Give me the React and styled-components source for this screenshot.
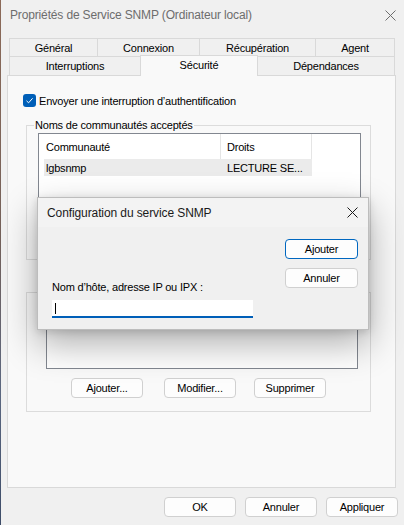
import React from "react";
import styled, { createGlobalStyle } from "styled-components";

const GlobalStyle = createGlobalStyle`
  html, body { margin: 0; padding: 0; }
  body {
    width: 404px;
    height: 525px;
    overflow: hidden;
    background: linear-gradient(#8c6a58 0%, #74615a 45%, #5b6780 75%, #3d4c68 100%);
    font-family: "Liberation Sans", Arial, sans-serif;
    font-size: 11px;
    letter-spacing: -0.2px;
    color: #000;
  }
`;

const Screen = styled.div`
  display: flex;
  width: 404px;
  height: 525px;
`;

const Edge = styled.div`
  width: 1px;
  flex: none;
`;

const Window = styled.div`
  position: relative;
  flex: 1;
  display: flex;
  flex-direction: column;
  background: #f0f0f0;
`;

const TitleBar = styled.div`
  height: 30px;
  display: flex;
  align-items: center;
  justify-content: space-between;
  padding: 0 8px 0 9px;
  color: #6d6d6d;
  font-size: 12px;
  letter-spacing: -0.15px;
`;

const CloseIcon = ({ size = 11, color = "#6d6d6d" }) => (
  <svg width={size} height={size} viewBox="0 0 11 11">
    <path d="M0.5 0.5 L10.5 10.5 M10.5 0.5 L0.5 10.5" stroke={color} strokeWidth="1" fill="none" />
  </svg>
);

const TabStrip = styled.div`
  margin-top: 8px;
  padding-left: 8px;
  display: flex;
  flex-direction: column;
`;

const TabRow = styled.div`
  display: flex;
  align-items: flex-end;
  height: ${(p) => p.$h}px;
`;

const Tab = styled.div`
  box-sizing: border-box;
  width: ${(p) => p.$w}px;
  height: ${(p) => p.$h}px;
  display: flex;
  align-items: center;
  justify-content: center;
  border: 1px solid #d9d9d9;
  border-bottom: none;
  margin-left: -1px;
  background: #f0f0f0;
  &:first-child { margin-left: 0; }
`;

const SelectedTab = styled(Tab)`
  position: relative;
  z-index: 1;
  background: #f9f9f9;
  align-items: flex-start;
  padding-top: 3px;
  margin-bottom: -1px;
`;

const Panel = styled.div`
  box-sizing: border-box;
  margin-left: 6px;
  width: 389px;
  height: 413px;
  background: #f9f9f9;
  border: 1px solid #d9d9d9;
  display: flex;
  flex-direction: column;
  padding: 18px 0 0 15px;
`;

const CheckRow = styled.label`
  display: flex;
  align-items: center;
  gap: 3px;
  height: 13px;
`;

const CheckBox = styled.span`
  width: 13px;
  height: 13px;
  border-radius: 3px;
  background: #005fb8;
  display: flex;
  align-items: center;
  justify-content: center;
`;

const GroupBox = styled.fieldset`
  box-sizing: border-box;
  margin: ${(p) => p.$mt}px 0 0 3px;
  width: 345px;
  height: ${(p) => p.$h}px;
  border: 1px solid #dcdcdc;
  padding: 0;
  display: flex;
  flex-direction: column;
  align-items: flex-start;
`;

const Legend = styled.legend`
  margin-left: 7px;
  padding: 0 1px;
  line-height: 13px;
  font-size: 11px;
`;

const ListView = styled.div`
  box-sizing: border-box;
  margin: ${(p) => p.$mt}px 0 0 ${(p) => p.$ml}px;
  width: ${(p) => p.$w}px;
  height: ${(p) => p.$h}px;
  background: #fff;
  border: 1px solid #828790;
  padding-left: 5px;
`;

const ListHeader = styled.div`
  display: grid;
  grid-template-columns: 177px 91px;
  height: 25px;
`;

const HeaderCell = styled.div`
  display: flex;
  align-items: center;
  padding-left: ${(p) => p.$pl || 2}px;
  border-right: 1px solid #e5e5e5;
`;

const ListRow = styled.div`
  display: grid;
  grid-template-columns: 177px 91px;
  height: 17px;
  background: #ebebeb;
  width: 268px;
`;

const Cell = styled.div`
  display: flex;
  align-items: center;
  padding-left: ${(p) => p.$pl || 2}px;
  white-space: nowrap;
`;

const ButtonRow = styled.div`
  display: flex;
  margin: ${(p) => p.$mt}px 0 0 ${(p) => p.$ml}px;
`;

const Button = styled.button`
  box-sizing: border-box;
  width: ${(p) => p.$w || 72}px;
  height: 20px;
  margin-left: ${(p) => p.$ml || 0}px;
  padding: 0;
  border: 1px solid ${(p) => (p.$default ? "#0067c0" : "#d0d0d0")};
  border-radius: 4px;
  background: #fdfdfd;
  font-family: inherit;
  font-size: 11px;
  letter-spacing: -0.2px;
  color: #000;
  display: flex;
  align-items: center;
  justify-content: center;
`;

const Footer = styled.div`
  display: flex;
  justify-content: flex-end;
  margin-top: 9px;
  padding-right: 6px;
`;

const Dialog = styled.div`
  position: absolute;
  left: 36px;
  top: 197px;
  box-sizing: border-box;
  width: 332px;
  height: 133px;
  background: #f0f0f0;
  border: 1px solid #bdbdbd;
  box-shadow: 0 14px 34px rgba(0, 0, 0, 0.32), 0 2px 8px rgba(0, 0, 0, 0.14);
  display: flex;
  flex-direction: column;
  z-index: 5;
`;

const DialogTitle = styled.div`
  height: 29px;
  display: flex;
  align-items: center;
  justify-content: space-between;
  padding: 0 10px 0 9px;
  background: #f3f3f3;
  font-size: 12px;
  letter-spacing: -0.1px;
  color: #1a1a1a;
`;

const DialogBody = styled.div`
  flex: 1;
  display: flex;
  justify-content: space-between;
  padding: 12px 10px 0 14px;
`;

const FieldColumn = styled.div`
  display: flex;
  flex-direction: column;
  padding-top: 40px;
`;

const FieldLabel = styled.div`
  height: 16px;
  line-height: 16px;
`;

const Input = styled.div`
  box-sizing: border-box;
  margin-top: 5px;
  width: 201px;
  height: 18px;
  background: #fff;
  border-bottom: 2px solid #005fb8;
  display: flex;
  align-items: center;
  padding-left: 3px;
`;

const Caret = styled.span`
  width: 1px;
  height: 11px;
  background: #000;
`;

const ButtonColumn = styled.div`
  display: flex;
  flex-direction: column;
  gap: 9px;
`;

export default function App() {
  return (
    <>
      <GlobalStyle />
      <Screen>
        <Edge />
        <Window>
          <TitleBar>
            <span>Propriétés de Service SNMP (Ordinateur local)</span>
            <CloseIcon />
          </TitleBar>
          <TabStrip>
            <TabRow $h={18}>
              <Tab $w={89} $h={18}>Général</Tab>
              <Tab $w={103} $h={18}>Connexion</Tab>
              <Tab $w={117} $h={18}>Récupération</Tab>
              <Tab $w={80} $h={18}>Agent</Tab>
            </TabRow>
            <TabRow $h={19}>
              <Tab $w={132} $h={19}>Interruptions</Tab>
              <SelectedTab $w={118} $h={21}>Sécurité</SelectedTab>
              <Tab $w={138} $h={19}>Dépendances</Tab>
            </TabRow>
          </TabStrip>
          <Panel>
            <CheckRow>
              <CheckBox>
                <svg width="9" height="9" viewBox="0 0 9 9">
                  <path d="M1.5 4.8 L3.6 6.8 L7.6 2.3" stroke="#fff" strokeWidth="1" fill="none" />
                </svg>
              </CheckBox>
              Envoyer une interruption d’authentification
            </CheckRow>
            <GroupBox $mt={12} $h={141}>
              <Legend>Noms de communautés acceptés</Legend>
              <ListView $mt={1} $ml={11} $w={323} $h={119}>
                <ListHeader>
                  <HeaderCell>Communauté</HeaderCell>
                  <HeaderCell $pl={6}>Droits</HeaderCell>
                </ListHeader>
                <ListRow>
                  <Cell>lgbsnmp</Cell>
                  <Cell $pl={6}>LECTURE SE...</Cell>
                </ListRow>
              </ListView>
            </GroupBox>
            <GroupBox $mt={32} $h={120}>
              <ListView $mt={11} $ml={19} $w={312} $h={65} />
              <ButtonRow $mt={9} $ml={44}>
                <Button>Ajouter...</Button>
                <Button $ml={21}>Modifier...</Button>
                <Button $ml={18}>Supprimer</Button>
              </ButtonRow>
            </GroupBox>
          </Panel>
          <Footer>
            <Button>OK</Button>
            <Button $ml={9}>Annuler</Button>
            <Button $ml={9}>Appliquer</Button>
          </Footer>
          <Dialog>
            <DialogTitle>
              <span>Configuration du service SNMP</span>
              <CloseIcon color="#1a1a1a" />
            </DialogTitle>
            <DialogBody>
              <FieldColumn>
                <FieldLabel>Nom d’hôte, adresse IP ou IPX :</FieldLabel>
                <Input>
                  <Caret />
                </Input>
              </FieldColumn>
              <ButtonColumn>
                <Button $w={73} $default>Ajouter</Button>
                <Button $w={73}>Annuler</Button>
              </ButtonColumn>
            </DialogBody>
          </Dialog>
        </Window>
      </Screen>
    </>
  );
}
